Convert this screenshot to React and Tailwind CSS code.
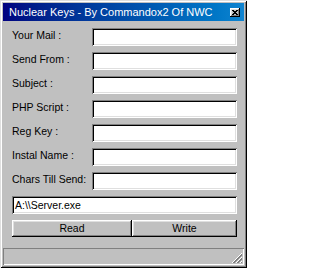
import React from 'react';

const labels = ['Your Mail :', 'Send From :', 'Subject :', 'PHP Script :', 'Reg Key :', 'Instal Name :', 'Chars Till Send:'];

const sunken = 'bg-white shadow-[inset_1px_1px_#808080,inset_-1px_-1px_#ffffff,inset_2px_2px_#000000,inset_-2px_-2px_#dfdfdf]';
const raised = 'bg-[#c0c0c0] shadow-[inset_-1px_-1px_#000000,inset_1px_1px_#ffffff,inset_-2px_-2px_#808080,inset_2px_2px_#dfdfdf]';

const App = () => {
    return (
        <div className="w-[247px] h-[268px] bg-[#c0c0c0] p-[3px] flex flex-col text-black font-['Liberation_Sans',Arial,sans-serif] text-[10.5px] leading-[13px] shadow-[inset_1px_1px_#dfdfdf,inset_-1px_-1px_#000000,inset_2px_2px_#ffffff,inset_-2px_-2px_#808080]">
            {/* Title bar */}
            <div className="h-[18px] shrink-0 flex items-center justify-between pl-[6px] pr-[4px] bg-gradient-to-r from-[#000080] to-[#1084d0]">
                <span className="text-white text-[11px] whitespace-nowrap">Nuclear Keys - By Commandox2 Of NWC</span>
                <div className={`w-[10px] h-[9px] flex items-center justify-center ${raised}`}>
                    <svg width="6" height="5" viewBox="0 0 6 5" shapeRendering="crispEdges">
                        <path d="M0 0h2v1h-2zM4 0h2v1h-2zM1 1h4v1h-4zM2 2h2v1h-2zM1 3h4v1h-4zM0 4h2v1h-2zM4 4h2v1h-2z" fill="#000" />
                    </svg>
                </div>
            </div>

            {/* Form */}
            <div className="flex flex-col pt-[7px] pl-[9px]">
                <div className="flex flex-col gap-[6px]">
                    {labels.map((l) => (
                        <div key={l} className="flex items-start h-[18px]">
                            <span className="w-[80px] whitespace-nowrap pt-[1px]">{l}</span>
                            <div className={`w-[145px] h-[18px] ${sunken}`}></div>
                        </div>
                    ))}
                </div>
                <div className={`mt-[6px] w-[225px] h-[18px] flex items-center pl-[3px] ${sunken}`}>
                    A:\\Server.exe
                </div>
                <div className="mt-[6px] flex w-[225px] h-[17px]">
                    <button className={`w-[120px] h-full flex items-center justify-center ${raised}`}>Read</button>
                    <button className={`w-[105px] h-full flex items-center justify-center ${raised}`}>Write</button>
                </div>
            </div>

            <div className="flex-1"></div>

            {/* Status bar */}
            <div className="h-[17px] shrink-0 relative shadow-[inset_1px_1px_#808080,inset_-1px_-1px_#ffffff]">
                <svg className="absolute right-[1px] bottom-[1px]" width="12" height="12" viewBox="0 0 12 12" shapeRendering="crispEdges">
                    <path d="M11 1L1 11M11 5L5 11M11 9L9 11" stroke="#ffffff" strokeWidth="1" />
                    <path d="M11 2L2 11M11 3L3 11M11 6L6 11M11 7L7 11M11 10L10 11" stroke="#808080" strokeWidth="1" />
                </svg>
            </div>
        </div>
    );
};

export default App;
